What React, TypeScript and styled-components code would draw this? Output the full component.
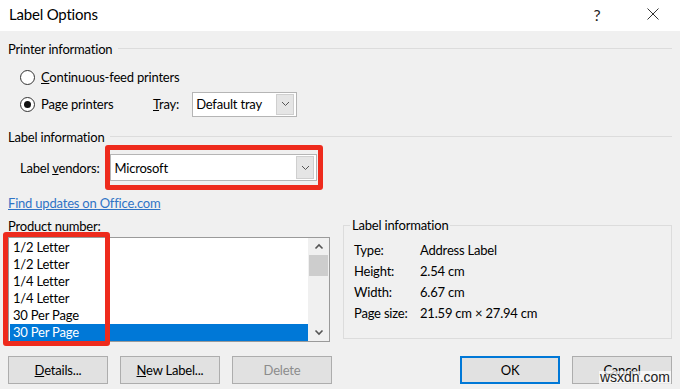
import React from 'react';
import styled, { createGlobalStyle } from 'styled-components';

const Global = createGlobalStyle`
  html, body { margin: 0; padding: 0; background: #f0f0f0; }
  #root { width: 680px; height: 389px; }
`;

const FONT = `Lato, "Open Sans", "Noto Sans", "Liberation Sans", sans-serif`;

const Dialog = styled.div`
  width: 680px;
  height: 389px;
  background: #f0f0f0;
  display: flex;
  flex-direction: column;
  position: relative;
  overflow: hidden;
  font-family: ${FONT};
  font-size: 13px;
  letter-spacing: -0.2px;
  color: #000;
`;

const TitleBar = styled.div`
  height: 31px;
  background: #fff;
  display: flex;
  align-items: center;
  padding-left: 9px;
`;

const Title = styled.div`
  flex: 1;
  font-size: 15px;
  margin-top: -3px;
  color: #000;
`;

const HelpGlyph = styled.div`
  width: 12px;
  text-align: center;
  font-size: 16px;
  color: #222;
  margin-right: 44px;
  margin-top: -3px;
`;

const CloseIcon = styled.svg`
  width: 12px;
  height: 12px;
  margin-right: 21px;
  margin-top: -3px;
`;

const Body = styled.div`
  flex: 1;
  display: flex;
  flex-direction: column;
  padding: 0 8px;
`;

const SectionHeader = styled.div<{ $top: number }>`
  display: flex;
  align-items: center;
  gap: 6px;
  height: 16px;
  margin-top: ${(p) => p.$top}px;
`;

const HeaderLine = styled.div`
  flex: 1;
  height: 1px;
  background: #dcdcdc;
  margin-top: -2px;
`;

const RadioRow = styled.div<{ $top: number }>`
  display: flex;
  align-items: center;
  height: 26px;
  padding-left: 12px;
  margin-top: ${(p) => p.$top}px;
`;

const RadioCircle = styled.span<{ $checked?: boolean }>`
  width: 13px;
  height: 13px;
  border: 1px solid #333;
  border-radius: 50%;
  background: #fff;
  display: inline-flex;
  align-items: center;
  justify-content: center;
  &::after {
    content: '';
    display: ${(p) => (p.$checked ? 'block' : 'none')};
    width: 7px;
    height: 7px;
    border-radius: 50%;
    background: #111;
  }
`;

const RadioLabel = styled.span<{ $width?: number }>`
  margin-left: 6px;
  ${(p) => (p.$width ? `width: ${p.$width}px;` : '')}
`;

const FieldLabel = styled.span<{ $gap: number }>`
  margin-right: ${(p) => p.$gap}px;
`;

const Combo = styled.div<{ $width: number; $height: number }>`
  width: ${(p) => p.$width}px;
  height: ${(p) => p.$height}px;
  box-sizing: border-box;
  border: 1px solid #b5b5b5;
  background: #fff;
  display: flex;
  align-items: center;
  padding: 0 2px 0 3px;
`;

const ComboText = styled.span`
  flex: 1;
`;

const ComboButton = styled.span<{ $height: number }>`
  width: 18px;
  height: ${(p) => p.$height}px;
  box-sizing: border-box;
  background: #e5e5e5;
  border: 1px solid #cfcfcf;
  display: flex;
  align-items: center;
  justify-content: center;
`;

const VendorRow = styled.div`
  display: flex;
  align-items: center;
  padding-left: 12px;
`;

const Highlight = styled.div`
  border: 5px solid #ee2b1d;
  border-radius: 3px;
  padding: 4px 1px 4px 0;
`;

const Link = styled.a`
  color: #2f74c6;
  text-decoration: underline;
  margin-top: 5px;
  height: 16px;
  line-height: 16px;
  align-self: flex-start;
`;

const Columns = styled.div`
  display: flex;
  gap: 13px;
  margin-top: 7px;
  align-items: flex-start;
`;

const LeftColumn = styled.div`
  width: 322px;
  display: flex;
  flex-direction: column;
`;

const PlainLabel = styled.div`
  height: 16px;
  line-height: 16px;
`;

const ListWrap = styled.div`
  position: relative;
  margin-top: 3px;
`;

const ListBox = styled.div`
  height: 105px;
  box-sizing: border-box;
  border: 1px solid #9a9a9a;
  background: #fff;
  display: flex;
`;

const Items = styled.div`
  flex: 1;
  padding: 1px 0 0 1px;
`;

const Item = styled.div<{ $selected?: boolean }>`
  height: 17px;
  line-height: 17px;
  padding-left: 3px;
  background: ${(p) => (p.$selected ? '#0078d7' : 'transparent')};
  color: ${(p) => (p.$selected ? '#fff' : '#000')};
`;

const ScrollBar = styled.div`
  width: 21px;
  background: #f0f0f0;
  display: flex;
  flex-direction: column;
  align-items: center;
`;

const ScrollArrow = styled.div`
  height: 17px;
  width: 100%;
  display: flex;
  align-items: center;
  justify-content: center;
`;

const ScrollThumb = styled.div`
  width: 19px;
  height: 21px;
  background: #cdcdcd;
`;

const ScrollTrack = styled.div`
  flex: 1;
`;

const ListHighlight = styled.div`
  position: absolute;
  left: -5px;
  top: -5px;
  width: 107px;
  height: 114px;
  box-sizing: border-box;
  border: 5px solid #ee2b1d;
  border-radius: 3px;
  pointer-events: none;
`;

const GroupBox = styled.fieldset`
  flex: 1;
  margin: 0;
  margin-top: -1px;
  border: 1px solid #dcdcdc;
  padding: 6px 10px 12px 10px;
  height: 122px;
  box-sizing: border-box;
  display: grid;
  grid-template-columns: 66px 1fr;
  grid-auto-rows: 21px;
  align-items: center;
  align-content: start;
`;

const Legend = styled.legend`
  padding: 0 2px;
  margin-left: -4px;
  line-height: 16px;
`;

const ButtonRow = styled.div`
  display: flex;
  gap: 12px;
  margin-top: 14px;
`;

const Spacer = styled.div`
  flex: 1;
`;

const Button = styled.button<{ $primary?: boolean }>`
  width: 100px;
  height: 28px;
  box-sizing: border-box;
  background: #e1e1e1;
  border: ${(p) => (p.$primary ? '2px solid #0078d7' : '1px solid #adadad')};
  font-family: ${FONT};
  font-size: 13px;
  letter-spacing: -0.2px;
  color: ${(p) => (p.disabled ? '#8c8c8c' : '#000')};
  padding: 0;
  margin: 0;
`;

const Watermark = styled.div`
  position: absolute;
  right: 9px;
  bottom: 5px;
  font-family: "Liberation Sans", sans-serif;
  font-size: 14px;
  letter-spacing: 0;
  color: #222;
  background: rgba(255, 255, 255, 0.7);
  line-height: 13px;
  padding: 0 1px;
`;

const SmallChevron = () => (
  <svg width="9" height="6" viewBox="0 0 9 6">
    <path d="M1 1 L4.5 4.5 L8 1" fill="none" stroke="#555" strokeWidth="1" />
  </svg>
);

const ScrollChevron = ({ up }: { up?: boolean }) => (
  <svg width="10" height="7" viewBox="0 0 10 7">
    <path
      d={up ? 'M1.5 5.5 L5 2 L8.5 5.5' : 'M1.5 1.5 L5 5 L8.5 1.5'}
      fill="none"
      stroke="#555"
      strokeWidth="1.6"
    />
  </svg>
);

export default function App() {
  return (
    <>
      <Global />
      <Dialog>
        <TitleBar>
          <Title>Label Options</Title>
          <HelpGlyph>?</HelpGlyph>
          <CloseIcon viewBox="0 0 12 12">
            <path d="M0.5 0.5 L11.5 11.5 M11.5 0.5 L0.5 11.5" stroke="#333" strokeWidth="1" />
          </CloseIcon>
        </TitleBar>
        <Body>
          <SectionHeader $top={10}>
            <span>Printer information</span>
            <HeaderLine />
          </SectionHeader>
          <RadioRow $top={7}>
            <RadioCircle />
            <RadioLabel>
              <u>C</u>ontinuous-feed printers
            </RadioLabel>
          </RadioRow>
          <RadioRow $top={1}>
            <RadioCircle $checked />
            <RadioLabel $width={112}>
              Pa<u>g</u>e printers
            </RadioLabel>
            <FieldLabel $gap={13}>
              <u>T</u>ray:
            </FieldLabel>
            <Combo $width={105} $height={25}>
              <ComboText>Default tray</ComboText>
              <ComboButton $height={21}>
                <SmallChevron />
              </ComboButton>
            </Combo>
          </RadioRow>
          <SectionHeader $top={12}>
            <span>Label information</span>
            <HeaderLine />
          </SectionHeader>
          <VendorRow>
            <FieldLabel $gap={6}>
              Label <u>v</u>endors:
            </FieldLabel>
            <Highlight>
              <Combo $width={207} $height={27}>
                <ComboText>Microsoft</ComboText>
                <ComboButton $height={23}>
                  <SmallChevron />
                </ComboButton>
              </Combo>
            </Highlight>
          </VendorRow>
          <Link href="#">Find updates on Office.com</Link>
          <Columns>
            <LeftColumn>
              <PlainLabel>Product number:</PlainLabel>
              <ListWrap>
                <ListBox>
                  <Items>
                    <Item>1/2 Letter</Item>
                    <Item>1/2 Letter</Item>
                    <Item>1/4 Letter</Item>
                    <Item>1/4 Letter</Item>
                    <Item>30 Per Page</Item>
                    <Item $selected>30 Per Page</Item>
                  </Items>
                  <ScrollBar>
                    <ScrollArrow>
                      <ScrollChevron up />
                    </ScrollArrow>
                    <ScrollThumb />
                    <ScrollTrack />
                    <ScrollArrow>
                      <ScrollChevron />
                    </ScrollArrow>
                  </ScrollBar>
                </ListBox>
                <ListHighlight />
              </ListWrap>
            </LeftColumn>
            <GroupBox>
              <Legend>Label information</Legend>
              <span>Type:</span>
              <span>Address Label</span>
              <span>Height:</span>
              <span>2.54 cm</span>
              <span>Width:</span>
              <span>6.67 cm</span>
              <span>Page size:</span>
              <span>21.59 cm × 27.94 cm</span>
            </GroupBox>
          </Columns>
          <ButtonRow>
            <Button>
              <u>D</u>etails...
            </Button>
            <Button>
              <u>N</u>ew Label...
            </Button>
            <Button disabled>Delete</Button>
            <Spacer />
            <Button $primary>OK</Button>
            <Button>Cancel</Button>
          </ButtonRow>
        </Body>
        <Watermark>wsxdn.com</Watermark>
      </Dialog>
    </>
  );
}
